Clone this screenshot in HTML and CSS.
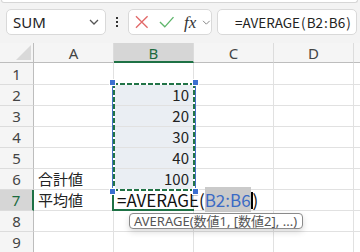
FILE: index.html
```html
<!DOCTYPE html>
<html>
<head>
    <title>AVERAGE</title>
    <link rel="stylesheet" href="styles.css">
</head>
<body>
    <div class="ribbon-edge"></div>
    <div class="fbar">
        <div class="namebox">
            <span>SUM</span>
            <svg class="chev" viewBox="0 0 10 6" width="10" height="6"><path d="M1,1 L5,5 L9,1" fill="none" stroke="#555" stroke-width="1.3"/></svg>
        </div>
        <div class="dots"><span></span><span></span><span></span></div>
        <div class="fbtns">
            <!-- cancel -->
            <svg viewBox="0 0 14 14" width="14" height="14"><path d="M1,1 L13,13 M13,1 L1,13" stroke="#e26a6a" stroke-width="1.4" fill="none"/></svg>
            <!-- enter -->
            <svg viewBox="0 0 16 12" width="16" height="12"><path d="M1,6 L6,11 L15,1" stroke="#5db56a" stroke-width="1.4" fill="none"/></svg>
            <span class="fx">fx</span>
            <svg viewBox="0 0 10 6" width="9" height="5"><path d="M1,1 L5,5 L9,1" fill="none" stroke="#888" stroke-width="1.2"/></svg>
        </div>
        <div class="finput">=AVERAGE<span class="p">(</span>B2<span class="p">:</span>B6<span class="p">)</span></div>
    </div>

    <div class="sheet">
        <!-- column headers -->
        <div class="h corner"><i></i></div>
        <div class="h col">A</div>
        <div class="h col sel">B</div>
        <div class="h col">C</div>
        <div class="h col">D</div>
        <div class="h col"></div>

        <div class="h row">1</div><div class="c"></div><div class="c"></div><div class="c"></div><div class="c"></div><div class="c"></div>
        <div class="h row">2</div><div class="c"></div>
        <div class="c rng num">10
            <!-- copied range B2:B6 -->
            <div class="range">
                <b class="hd tl"></b><b class="hd tr"></b><b class="hd bl"></b><b class="hd br"></b>
            </div>
        </div>
        <div class="c"></div><div class="c"></div><div class="c"></div>
        <div class="h row">3</div><div class="c"></div><div class="c rng num">20</div><div class="c"></div><div class="c"></div><div class="c"></div>
        <div class="h row">4</div><div class="c"></div><div class="c rng num">30</div><div class="c"></div><div class="c"></div><div class="c"></div>
        <div class="h row">5</div><div class="c"></div><div class="c rng num">40</div><div class="c"></div><div class="c"></div><div class="c"></div>
        <div class="h row">6</div><div class="c">合計値</div><div class="c rng num">100</div><div class="c"></div><div class="c"></div><div class="c"></div>
        <div class="h row sel">7</div><div class="c">平均値</div>
        <div class="c">
            <!-- B7 in edit mode -->
            <div class="edit">=AVERAGE(<span class="ref">B2:B6</span><span class="caret"></span>)</div>
        </div>
        <div class="c"></div><div class="c"></div><div class="c"></div>
        <div class="h row">8</div><div class="c"></div>
        <div class="c">
            <!-- argument hint -->
            <div class="hint">AVERAGE(数値1, [数値2], ...)</div>
        </div>
        <div class="c"></div><div class="c"></div><div class="c"></div>
        <div class="h row">9</div><div class="c"></div><div class="c"></div><div class="c"></div><div class="c"></div><div class="c"></div>
    </div>
</body>
</html>
```

FILE: styles.css
```css
body {
    margin: 0;
    width: 360px;
    height: 252px;
    overflow: hidden;
    background-color: #f3f3f3;
    font-family: "Noto Sans", "Noto Sans CJK JP", sans-serif;
    color: #222;
}
.ribbon-edge {
    height: 2px;
    margin: 0 2px 0 1px;
    background-color: white;
    border: 1px solid #d6d6d6;
    border-top: none;
    border-radius: 0 0 5px 5px;
}
.fbar {
    display: flex;
    align-items: center;
    padding: 6px 3px 8px 6px;
}
.namebox, .fbtns, .finput {
    height: 26px;
    box-sizing: border-box;
    background-color: white;
    border: 1px solid #d9d9d9;
    border-radius: 5px;
    display: flex;
    align-items: center;
}
.namebox {
    width: 100px;
    padding: 0 6px 0 6px;
    justify-content: space-between;
    font-size: 15px;
}
.dots {
    width: 22px;
    display: flex;
    flex-direction: column;
    align-items: center;
    gap: 2px;
}
.dots span {
    width: 2px;
    height: 2px;
    background-color: #333;
}
.fbtns {
    width: 84px;
    padding: 0 0 0 6px;
    gap: 9px;
}
.fbtns svg:nth-child(2) {
    margin-left: 1px;
}
.fx {
    font-family: "Liberation Serif", serif;
    font-style: italic;
    font-size: 17px;
    color: #333;
    margin-left: 1px;
    margin-right: -3px;
    line-height: 1;
}
.finput {
    flex: 1;
    margin-left: 5px;
    padding-left: 17px;
    font-family: "Noto Sans CJK JP", sans-serif;
    font-size: 13.5px;
}
.finput .p {
    margin: 0 1px;
}

/* grid */
.sheet {
    display: grid;
    grid-template-columns: 34px repeat(4, 80px) 1fr;
    grid-template-rows: 20px 22px repeat(8, 21px);
    background-color: white;
    font-family: "Noto Sans CJK JP", sans-serif;
    font-size: 15px;
}
.c {
    position: relative;
    border-right: 1px solid #e1e1e1;
    border-bottom: 1px solid #e1e1e1;
    padding: 0 4px;
    line-height: 20px;
    white-space: nowrap;
}
.num {
    text-align: right;
}
.rng {
    background-color: #eaeef3;
}
.h {
    background-color: #f5f5f5;
    font-family: "Noto Sans", sans-serif;
    font-size: 15px;
    color: #444;
    display: flex;
    align-items: center;
    justify-content: center;
    box-sizing: border-box;
}
.col {
    border-right: 1px solid #dcdcdc;
    border-bottom: 1px solid #bdbdbd;
}
.row {
    border-right: 1px solid #bdbdbd;
    border-bottom: 1px solid #dcdcdc;
}
.corner {
    border-right: 1px solid #bdbdbd;
    border-bottom: 1px solid #bdbdbd;
    align-items: flex-end;
    justify-content: flex-end;
    padding: 0 2px 2px 0;
}
.corner i {
    width: 15px;
    height: 15px;
    background-color: #d9d9d9;
    clip-path: polygon(100% 0, 100% 100%, 0 100%);
}
.col.sel {
    background-color: #d6d6d6;
    color: #1d6b3f;
    border-bottom: 2px solid #1e7145;
    padding-top: 1px;
}
.row.sel {
    background-color: #d6d6d6;
    color: #1d6b3f;
    border-right: 2px solid #1e7145;
}

/* copied range, drawn over B2:B6 */
.range {
    position: absolute;
    left: -2px;
    top: -2px;
    width: 84px;
    height: 108px;
    box-sizing: border-box;
    z-index: 2;
    border-left: 1px solid #4472c4;
    border-right: 1px solid #4472c4;
    background:
        repeating-linear-gradient(90deg, #217346 0 5px, #fff 5px 7px) top / 100% 2px no-repeat,
        repeating-linear-gradient(90deg, #217346 0 5px, #fff 5px 7px) bottom / 100% 2px no-repeat,
        repeating-linear-gradient(180deg, #217346 0 5px, #fff 5px 7px) left / 2px 100% no-repeat,
        repeating-linear-gradient(180deg, #217346 0 5px, #fff 5px 7px) right / 2px 100% no-repeat;
}
.hd {
    position: absolute;
    width: 5px;
    height: 5px;
    background-color: #3b6fd0;
    border: 1px solid white;
}
.hd.tl { left: -4px; top: -4px; }
.hd.tr { right: -4px; top: -4px; }
.hd.bl { left: -4px; bottom: -4px; }
.hd.br { right: -4px; bottom: -4px; }

/* B7 in edit mode */
.edit {
    position: absolute;
    top: 0;
    bottom: -1px;
    left: -2px;
    width: 82px;
    z-index: 1;
    border-left: 2px solid #1e7145;
    border-bottom: 2px solid #1e7145;
    padding-left: 3px;
    box-sizing: border-box;
    font-size: 17px;
    line-height: 20px;
    white-space: nowrap;
    color: #111;
}
.ref {
    color: #3b6bc5;
    background-color: #cacaca;
}
.caret {
    display: inline-block;
    width: 2px;
    height: 17px;
    background-color: #000;
    vertical-align: -2px;
}
.hint {
    position: absolute;
    left: 15px;
    top: 2px;
    z-index: 3;
    height: 16px;
    box-sizing: border-box;
    padding: 0 5px 0 4px;
    background-color: white;
    border: 1px solid #8a8a8a;
    border-radius: 4px;
    box-shadow: 0 3px 6px rgba(0,0,0,0.15);
    font-family: "Noto Sans", "Noto Sans CJK JP", sans-serif;
    font-size: 13px;
    line-height: 14px;
    color: #555;
}
```
